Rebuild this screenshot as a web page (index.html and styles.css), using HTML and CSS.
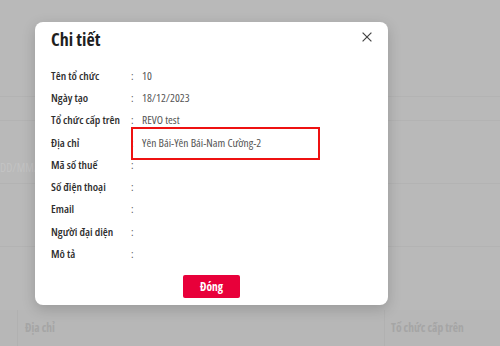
FILE: index.html
```html
<!DOCTYPE html>
<html lang="vi">
<head>
<meta charset="utf-8">
<link rel="stylesheet" href="styles.css">
</head>
<body>
<div class="page">
  <div class="bg-form">
    <div class="bg-line l1"></div>
    <div class="bg-line l2"></div>
    <div class="bg-placeholder">DD/MM/</div>
    <div class="bg-line l3"></div>
    <div class="bg-line l4"></div>
  </div>
  <div class="bg-table">
    <div class="th th-first"></div>
    <div class="th th-addr">Địa chỉ</div>
    <div class="th th-org">Tổ chức cấp trên</div>
  </div>
</div>

<div class="modal">
  <div class="modal-header">
    <h2 class="modal-title">Chi tiết</h2>
    <button class="close" aria-label="close">
      <svg width="10" height="10" viewBox="0 0 10 10"><path d="M0.6 0.6L9.4 9.4M9.4 0.6L0.6 9.4" stroke="#444" stroke-width="1.2" fill="none"/></svg>
    </button>
  </div>
  <div class="modal-body">
    <div class="row"><span class="label">Tên tổ chức</span><span class="colon">:</span><span class="value">10</span></div>
    <div class="row"><span class="label">Ngày tạo</span><span class="colon">:</span><span class="value">18/12/2023</span></div>
    <div class="row"><span class="label">Tổ chức cấp trên</span><span class="colon">:</span><span class="value">REVO test</span></div>
    <div class="row"><span class="label">Địa chỉ</span><span class="colon">:</span><span class="value">Yên Bái-Yên Bái-Nam Cường-2</span></div>
    <div class="row"><span class="label">Mã số thuế</span><span class="colon">:</span><span class="value"></span></div>
    <div class="row"><span class="label">Số điện thoại</span><span class="colon">:</span><span class="value"></span></div>
    <div class="row"><span class="label">Email</span><span class="colon">:</span><span class="value"></span></div>
    <div class="row"><span class="label">Người đại diện</span><span class="colon">:</span><span class="value"></span></div>
    <div class="row"><span class="label">Mô tả</span><span class="colon">:</span><span class="value"></span></div>
  </div>
  <div class="modal-footer">
    <button class="btn-close">Đóng</button>
  </div>
  <div class="highlight"></div>
</div>
</body>
</html>
```

FILE: styles.css
```css
html, body {
  margin: 0;
  padding: 0;
}
body {
  width: 500px;
  height: 346px;
  overflow: hidden;
  background: #b9b9b9;
  font-family: "Open Sans", sans-serif;
  font-stretch: 78%;
  position: relative;
}
.page {
  height: 346px;
  display: flex;
  flex-direction: column;
  justify-content: space-between;
}
.bg-form {
  padding-top: 96px;
  display: flex;
  flex-direction: column;
}
.bg-line {
  height: 1px;
  background: #b3b3b3;
}
.l1 { margin-bottom: 23px; }
.bg-placeholder {
  font-size: 12px;
  color: #c3c3c3;
  height: 14px;
  line-height: 14px;
  margin-top: 40px;
  white-space: nowrap;
}
.l3 { margin-top: 8px; margin-bottom: 62px; }
.bg-table {
  display: flex;
  height: 36px;
  align-items: center;
  background: #b7b7b7;
}
.th {
  font-size: 11.5px;
  font-weight: 700;
  color: #a5a5a5;
  height: 36px;
  line-height: 36px;
  border-left: 1px solid #b1b1b1;
}
.th-first { width: 17px; border-left: none; }
.th-addr { width: 359px; padding-left: 7px; }
.th-org { flex: 1; padding-left: 6px; }

.modal {
  position: absolute;
  left: 35px;
  top: 22px;
  width: 353px;
  height: 283px;
  box-sizing: border-box;
  background: #fff;
  border-radius: 8px;
  box-shadow: 0 4px 14px rgba(0,0,0,0.18);
  padding: 0 16px 7px 16px;
  display: flex;
  flex-direction: column;
}
.modal-header {
  height: 41px;
  display: flex;
  justify-content: space-between;
  align-items: flex-start;
  padding-top: 5px;
  box-sizing: border-box;
}
.modal-title {
  margin: 0;
  font-size: 18px;
  font-weight: 700;
  color: #1f1f1f;
  line-height: 24px;
}
.close {
  border: none;
  background: none;
  padding: 0;
  margin: 4px -1px 0 0;
  width: 12px;
  height: 12px;
  display: flex;
  align-items: center;
  justify-content: center;
}
.modal-body {
  padding-top: 1px;
  display: flex;
  flex-direction: column;
}
.row {
  height: 22.3px;
  display: flex;
  align-items: center;
  font-size: 11.5px;
}
.label {
  width: 80px;
  font-weight: 650;
  color: #2e2e2e;
  white-space: nowrap;
}
.colon {
  width: 11px;
  color: #555;
}
.value {
  color: #555;
}
.modal-footer {
  margin-top: auto;
  display: flex;
  justify-content: center;
}
.btn-close {
  width: 57px;
  height: 23px;
  border: none;
  border-radius: 2px;
  background: #e8003a;
  color: #fff;
  font-family: "Open Sans", sans-serif;
  font-stretch: 78%;
  font-weight: 700;
  font-size: 11.5px;
  padding: 0;
}
.highlight {
  position: absolute;
  left: 96px;
  top: 105px;
  width: 189px;
  height: 33px;
  box-sizing: border-box;
  border: 2px solid #ee1111;
}
```
